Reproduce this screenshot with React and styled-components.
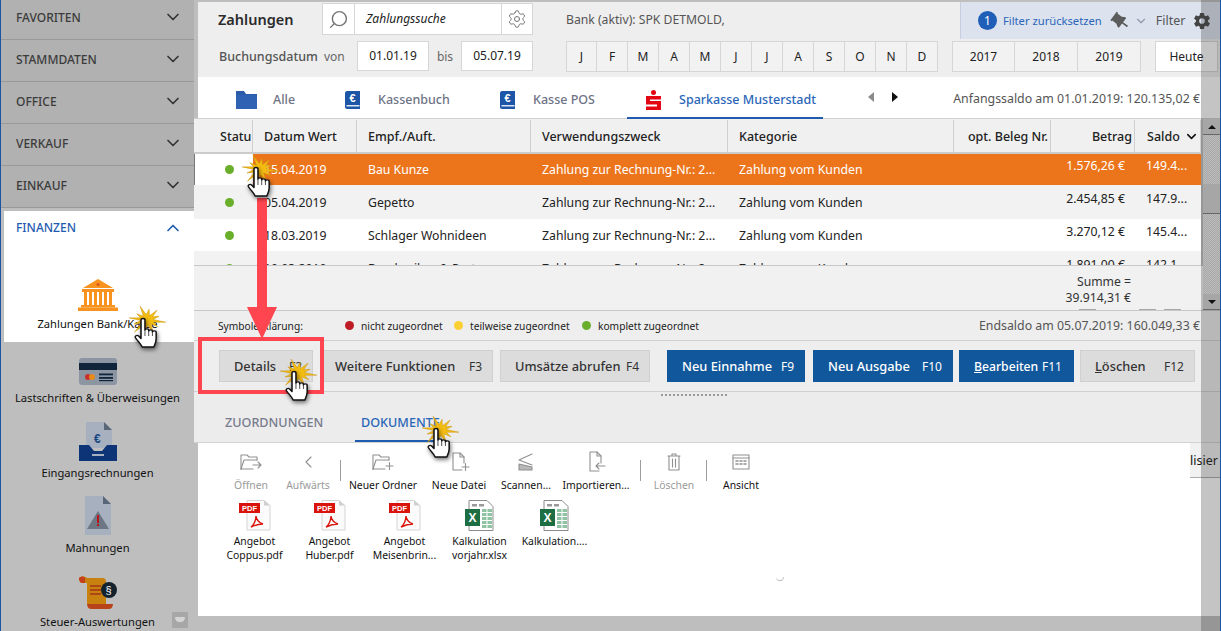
import React from 'react';
import styled, { createGlobalStyle } from 'styled-components';
import { ChevronDown, ChevronUp, Search, Settings } from 'lucide-react';
import { IoSettingsSharp } from 'react-icons/io5';
import { RiPushpinFill } from 'react-icons/ri';

const GlobalStyle = createGlobalStyle`
	html, body { margin: 0; padding: 0; background: #bebebe; }
	* { box-sizing: border-box; }
	body { font-family: "Noto Sans", "Open Sans", sans-serif; font-size: 12px; color: #222; }
`;

const Shell = styled.div`
	position: relative;
	display: flex;
	width: 1221px;
	height: 631px;
	overflow: hidden;
	background: #bebebe;
`;

/* ---------- sidebar ---------- */
const Sidebar = styled.aside`
	position: relative;
	flex: 0 0 194px;
	display: flex;
	flex-direction: column;
	margin-top: -2px;
	border-left: 1px solid #1c55a5;
	background: #bebebe;
`;
const SideHead = styled.div`
	display: flex;
	align-items: center;
	justify-content: space-between;
	height: 42px;
	flex: none;
	padding: 0 11px 3px 15px;
	background: #b1b1b1;
	border-bottom: 1px solid #999;
	color: #3b3b3b;
	font-size: 12px;
	font-weight: 500;
`;
const ActivePanel = styled.div`
	margin: 3px 0 0 3px;
	height: 131px;
	flex: none;
	background: #fff;
`;
const ActiveHead = styled.div`
	display: flex;
	align-items: center;
	justify-content: space-between;
	height: 33px;
	padding: 0 11px 0 12px;
	color: #1f5cb0;
	font-size: 12px;
	font-weight: 500;
`;
const NavItem = styled.div`
	display: flex;
	flex-direction: column;
	align-items: center;
	flex: none;
	margin-top: ${p => p.$top}px;
	margin-left: ${p => p.$left || 0}px;
	color: #111;
	font-size: 11.2px;
	line-height: 16px;
	white-space: nowrap;
	svg { display: block; margin-bottom: ${p => p.$gap}px; }
`;
const CollapseButton = styled.div`
	position: absolute;
	right: 6px;
	top: 614px;
	width: 16px;
	height: 16px;
	background: #a7a7a7;
	&::after {
		content: '';
		position: absolute;
		left: 3px;
		top: 5px;
		width: 10px;
		height: 5px;
		border-radius: 1px 1px 5px 5px;
		background: #d4d4d4;
	}
`;

/* ---------- main ---------- */
const Main = styled.main`
	flex: 0 0 1027px;
	display: flex;
	flex-direction: column;
	padding-top: 2px;
`;
const Toolbar = styled.section`
	margin-left: 4px;
	height: 75px;
	flex: none;
	background: #eeeeee;
`;
const ToolRow = styled.div`
	display: flex;
	align-items: ${p => p.$align || 'flex-start'};
	height: ${p => p.$h}px;
	padding-left: ${p => p.$pad || 0}px;
	padding-bottom: ${p => p.$bottom || 0}px;
`;
const Title = styled.h1`
	flex: 0 0 104px;
	margin: 0;
	padding: 6px 0 0 0;
	font-size: 14.5px;
	line-height: 22px;
	font-weight: 600;
	color: #2b2b2b;
`;
const SearchBox = styled.div`
	display: flex;
	width: 211px;
	height: 32px;
	margin-top: 1px;
	background: #fff;
	border: 1px solid #d6d6d6;
`;
const SearchCell = styled.div`
	flex: 0 0 ${p => p.$w}px;
	display: flex;
	align-items: center;
	justify-content: center;
	border-left: ${p => (p.$line ? '1px solid #d6d6d6' : 'none')};
	color: #757575;
`;
const SearchText = styled.div`
	flex: 1;
	padding-left: 11px;
	border-left: 1px solid #d6d6d6;
	line-height: 30px;
	font-style: italic;
	font-size: 12px;
	color: #222;
`;
const BankText = styled.div`
	margin-left: 33px;
	padding-top: 9px;
	font-size: 12.2px;
	color: #555;
	line-height: 18px;
`;
const FilterPanel = styled.div`
	display: flex;
	align-items: center;
	margin-left: auto;
	flex: 0 0 261px;
	height: 37px;
	padding-left: 17px;
	background: #dce3ef;
	border-left: 1px solid #c5cfe0;
`;
const FilterBadge = styled.span`
	flex: none;
	width: 19px;
	height: 19px;
	margin-right: 6px;
	border-radius: 50%;
	background: #1f5fb8;
	color: #fff;
	text-align: center;
	font-size: 12px;
	line-height: 19px;
`;
const FilterReset = styled.span`
	color: #2a66b8;
	font-size: 11.2px;
	white-space: nowrap;
`;
const FilterLabel = styled.span`
	margin: 0 8px 0 8px;
	color: #555;
	font-size: 12.5px;
`;
const DateLabel = styled.span`
	flex: 0 0 ${p => p.$w}px;
	font-size: ${p => p.$size || 12}px;
	font-weight: ${p => p.$weight || 400};
	text-align: ${p => p.$align || 'left'};
	color: ${p => p.$color || '#666'};
	white-space: nowrap;
`;
const DateInput = styled.div`
	flex: 0 0 72px;
	height: 30px;
	background: #fff;
	border: 1px solid #d6d6d6;
	text-align: center;
	line-height: 28px;
	font-size: 12px;
	color: #222;
`;
const Segment = styled.div`
	display: flex;
	flex: none;
	margin-left: ${p => p.$ml}px;
	height: 31px;
`;
const SegCell = styled.div`
	width: ${p => p.$w}px;
	background: ${p => (p.$white ? '#fff' : '#f2f2f2')};
	border: 1px solid #d6d6d6;
	border-left-width: ${p => (p.$first ? 1 : 0)}px;
	text-align: center;
	line-height: 29px;
	font-size: 12px;
	color: #222;
`;

const TabBar = styled.nav`
	display: flex;
	align-items: stretch;
	height: 42px;
	flex: none;
	padding: 0 21px 0 25px;
	background: linear-gradient(to right, #bebebe 4px, #fff 4px);
	border-bottom: 1px solid #cfcfcf;
`;
const Tab = styled.div`
	flex: 0 0 ${p => p.$w}px;
	display: flex;
	align-items: center;
	padding: 5px 0 0 ${p => p.$pad}px;
	color: ${p => (p.$active ? '#2a66b8' : '#6e7385')};
	font-size: 12.5px;
	font-weight: 500;
	border-bottom: ${p => (p.$active ? '2px solid #1f5cb0' : '2px solid transparent')};
	margin-bottom: -1px;
`;
const TabIcon = styled.span`
	flex: 0 0 ${p => p.$w}px;
	display: flex;
	align-items: center;
`;
const Pager = styled.div`
	display: flex;
	align-items: center;
	gap: 18px;
	margin-left: 45px;
	padding-bottom: 2px;
`;
const Caret = styled.span`
	width: 0;
	height: 0;
	border-style: solid;
	border-width: 5px 0 5px 0;
	border-color: transparent;
	${p => (p.$left
		? `border-right: 6px solid ${p.$color};`
		: `border-left: 6px solid ${p.$color};`)}
`;
const SaldoText = styled.div`
	margin-left: auto;
	align-self: center;
	padding-top: 2px;
	font-size: 12.35px;
	color: #555;
	white-space: nowrap;
`;

const columns = '59px 104px 174px 197px 226px 97px 84px 66px';
const TableHead = styled.div`
	display: grid;
	grid-template-columns: ${columns};
	width: 1007px;
	height: 35px;
	flex: none;
	padding-top: 1px;
	background: #f0f0f0;
	border-bottom: 2px solid #cbcbcb;
`;
const HeadCell = styled.div`
	display: flex;
	align-items: center;
	justify-content: ${p => (p.$right ? 'flex-end' : 'flex-start')};
	padding: 0 ${p => (p.$right ? 2 : 0)}px 0 ${p => p.$pad ?? 11}px;
	border-right: 1px solid #cfcfcf;
	font-size: 12.5px;
	font-weight: 500;
	color: #222;
	white-space: nowrap;
	overflow: hidden;
`;
const TableBody = styled.div`
	width: 1007px;
	height: 111px;
	flex: none;
	overflow: hidden;
	background: #fff;
`;
const Row = styled.div`
	display: grid;
	grid-template-columns: ${columns};
	height: ${p => p.$h}px;
	background: ${p => p.$bg};
	color: #222;
	font-size: 12.25px;
	line-height: 20px;
`;
const Cell = styled.div`
	padding: ${p => p.$top}px ${p => (p.$right ? 10 : 0)}px 0 11px;
	white-space: nowrap;
	overflow: hidden;
	color: ${p => p.$color || 'inherit'};
	text-align: ${p => (p.$right ? 'right' : 'left')};
`;
const StatusCell = styled.div`
	padding: ${p => p.$top + 5}px 0 0 ${p => (p.$mark ? 30 : 31)}px;
	background: ${p => p.$bg};
	border-left: ${p => (p.$mark ? '1px solid #777' : 'none')};
`;
const Dot = styled.span`
	display: block;
	flex: none;
	width: 9px;
	height: 9px;
	border-radius: 50%;
	background: ${p => p.$color};
`;
const SumBar = styled.div`
	display: flex;
	flex-direction: column;
	align-items: flex-end;
	height: 46px;
	flex: none;
	padding: 8px 90px 0 0;
	background: #f1f1f1;
	border-top: 1px solid #c8c8c8;
	border-bottom: 1px solid #c8c8c8;
	text-align: right;
	line-height: 16px;
	font-size: 12.2px;
	color: #333;
`;
const Ticks = styled.div`
	display: flex;
	margin: 3px -50px 0 0;
	gap: 8px;
`;
const Tick = styled.i`
	display: block;
	width: 17px;
	height: 1px;
	margin-left: ${p => p.$ml || 0}px;
	background: #a8a8a8;
`;
const LegendBar = styled.div`
	display: flex;
	align-items: center;
	height: 30px;
	flex: none;
	padding: 0 21px 0 24px;
	background: #eeeeee;
	border-bottom: 1px solid #d0d0d0;
	font-size: 10.2px;
	color: #222;
`;
const LegendTitle = styled.span`
	flex: 0 0 127px;
`;
const LegendItem = styled.span`
	flex: 0 0 ${p => p.$w}px;
	display: flex;
	align-items: center;
	gap: 7px;
	white-space: nowrap;
`;
const EndSaldo = styled.span`
	margin-left: auto;
	font-size: 12.35px;
	color: #555;
	white-space: nowrap;
`;
const ActionBar = styled.div`
	display: flex;
	height: 51px;
	flex: none;
	padding: 9px 0 0 25px;
	background: #eeeeee;
	border-bottom: 1px solid #d0d0d0;
`;
const ActionButton = styled.div`
	flex: 0 0 ${p => p.$w}px;
	display: flex;
	align-items: center;
	justify-content: space-between;
	height: 32px;
	margin-left: ${p => p.$ml || 0}px;
	padding: 0 ${p => p.$right ?? 10}px 0 14px;
	background: ${p => (p.$primary ? '#11579b' : '#dcdcdc')};
	border: 1px solid ${p => (p.$primary ? '#11579b' : '#d0d0d0')};
	color: ${p => (p.$primary ? '#fff' : '#333')};
	font-size: ${p => p.$size || 12.8}px;
	font-weight: 500;
	white-space: nowrap;
	small { font-size: 12px; font-weight: 400; }
`;
const DetailPane = styled.section`
	height: 51px;
	flex: none;
	background: #ececec;
	border-bottom: 1px solid #d2d2d2;
`;
const Splitter = styled.div`
	width: 68px;
	height: 4px;
	margin: 1px 0 0 466px;
	background-image: radial-gradient(#9a9a9a 1px, transparent 1px);
	background-size: 4px 4px;
`;
const DetailTabs = styled.div`
	display: flex;
	height: 45px;
	padding-left: 31px;
`;
const DetailTab = styled.div`
	flex: 0 0 ${p => p.$w}px;
	padding: 17px 0 0 ${p => p.$pad}px;
	line-height: 18px;
	font-size: 12.6px;
	font-weight: 500;
	white-space: nowrap;
	color: ${p => (p.$active ? '#2a66b8' : '#777b8c')};
	border-bottom: ${p => (p.$active ? '2px solid #1f5cb0' : '2px solid transparent')};
`;
const Documents = styled.section`
	margin-left: 4px;
	height: 173px;
	flex: none;
	background: #fff;
`;
const DocTools = styled.div`
	display: flex;
	height: 53px;
	padding-left: 27px;
`;
const DocTool = styled.div`
	flex: 0 0 ${p => p.$w}px;
	display: flex;
	flex-direction: column;
	align-items: center;
	padding-top: 10px;
	font-size: 10.4px;
	line-height: 14px;
	white-space: nowrap;
	color: ${p => (p.$off ? '#9a9a9a' : '#111')};
	svg { display: block; margin-bottom: 7px; }
`;
const DocSep = styled.i`
	flex: none;
	width: 1px;
	height: 21px;
	margin: 17px ${p => p.$r}px 0 ${p => p.$l}px;
	background: #9d9d9d;
`;
const ClippedButton = styled.div`
	margin-left: auto;
	width: 31px;
	height: 35px;
	background: #f1f1f1;
	border-bottom: 1px solid #aaa;
	font-size: 12.5px;
	line-height: 36px;
	color: #111;
`;
const FileGrid = styled.div`
	display: flex;
	padding: 4px 0 0 19px;
`;
const FileItem = styled.div`
	flex: 0 0 75px;
	display: flex;
	flex-direction: column;
	align-items: center;
	text-align: center;
	font-size: 10.4px;
	line-height: 13.5px;
	color: #111;
	white-space: nowrap;
	svg { display: block; margin-bottom: 4px; }
`;

/* ---------- tutorial overlays ---------- */
const DimStrip = styled.div`
	position: absolute;
	left: 1201px;
	top: 0;
	bottom: 0;
	width: 20px;
	background: rgba(60, 60, 60, 0.3);
	border-right: 1px solid #1c55a5;
`;
const ScrollBar = styled.div`
	position: absolute;
	left: 1203px;
	top: 119px;
	width: 17px;
	height: 191px;
	background: repeating-conic-gradient(#a8a8a8 0 25%, #bcbcbc 0 50%) 0 0 / 2px 2px;
`;
const ScrollBtn = styled.div`
	position: absolute;
	left: 0;
	${p => (p.$down ? 'bottom: 0;' : 'top: 0;')}
	width: 17px;
	height: 16px;
	background: #a6a6a6;
	border-bottom: 1px solid #666;
	display: flex;
	align-items: center;
	justify-content: center;
`;
const ScrollThumb = styled.div`
	position: absolute;
	left: 0;
	top: 65px;
	width: 17px;
	height: 30px;
	background: #a6a6a6;
	border-bottom: 1px solid #666;
`;
const MiniCaret = styled.span`
	width: 0;
	height: 0;
	border-left: 4px solid transparent;
	border-right: 4px solid transparent;
	${p => (p.$down ? 'border-top: 4px solid #111;' : 'border-bottom: 4px solid #111;')}
`;
const ArrowShaft = styled.div`
	position: absolute;
	left: 257px;
	top: 198px;
	width: 10px;
	height: 110px;
	background: #ff4550;
`;
const ArrowHead = styled.div`
	position: absolute;
	left: 247px;
	top: 307px;
	width: 0;
	height: 0;
	border-left: 15px solid transparent;
	border-right: 15px solid transparent;
	border-top: 32px solid #ff4550;
`;
const HighlightBox = styled.div`
	position: absolute;
	left: 198px;
	top: 337px;
	width: 126px;
	height: 57px;
	border: 4px solid #ff4550;
`;
const Smudge = styled.div`
	position: absolute;
	left: 776px;
	top: 577px;
	width: 8px;
	height: 4px;
	border-bottom: 1px solid #bbb;
	border-right: 1px solid #ccc;
	border-radius: 0 0 6px 6px;
`;
const ClickMarkWrap = styled.div`
	position: absolute;
	left: ${p => p.$x}px;
	top: ${p => p.$y}px;
	width: 40px;
	height: 52px;
	svg { position: absolute; overflow: visible; }
`;

/* ---------- drawings ---------- */
const burstRadii = [19, 7, 14, 6, 17, 7, 13, 6, 20, 7, 14, 6, 18, 7, 13, 6, 19, 7, 14, 6, 16, 7, 13, 6];
const burstPoints = burstRadii
	.map((r, i) => {
		const a = (i / burstRadii.length) * Math.PI * 2 + 0.15;
		return `${(Math.cos(a) * r).toFixed(1)},${(Math.sin(a) * r * 0.78).toFixed(1)}`;
	})
	.join(' ');

const ClickMark = ({ x, y }) => (
	<ClickMarkWrap $x={x} $y={y}>
		<svg width="40" height="32" viewBox="-20 -16 40 32" style={{ left: 0, top: 0 }}>
			<polygon points={burstPoints} fill="#f4bd12" stroke="#c9920a" strokeWidth="0.5" />
		</svg>
		<svg
			width="28"
			height="32"
			viewBox="0 0 24 32"
			preserveAspectRatio="none"
			style={{ left: 7, top: 14, filter: 'drop-shadow(1px 2px 2px rgba(0,0,0,.55))' }}
		>
			<path
				d="M6 2c0-2 3.400-2 3.400 0v10c0-1.600 3.200-1.600 3.200 0v1c0-1.600 3.200-1.600 3.200 0v1c0-1.600 3.200-1.600 3.200 0v7c0 3-1 5-2 8H7c-1-3-4-6-5.600-9-1-2 1-3.500 2.600-2l2 2.500z"
				fill="#fff"
				stroke="#111"
				strokeWidth="1.300"
				strokeLinejoin="round"
			/>
			<path d="M9.400 12v6M12.600 13v5M15.800 14v4" stroke="#333" strokeWidth="0.800" />
		</svg>
	</ClickMarkWrap>
);

const BankIcon = () => (
	<svg width="40" height="32" viewBox="0 0 40 32">
		<path d="M20 0 35 9H5z" fill="#f7931e" />
		<circle cx="20" cy="5.500" r="1.500" fill="#d9541e" />
		<rect x="4" y="10" width="32" height="3" fill="#f7931e" />
		{[6, 11, 16, 21, 26, 31].map(x => <rect key={x} x={x} y="13" width="3" height="13" fill="#f7931e" />)}
		<rect x="3" y="26" width="34" height="2.500" fill="#f7931e" />
		<rect x="0" y="28.500" width="40" height="3.500" fill="#f7931e" />
	</svg>
);
const CardIcon = () => (
	<svg width="38" height="27" viewBox="0 0 38 27">
		<rect width="38" height="27" rx="3" fill="#8c96a3" />
		<rect y="5" width="38" height="7" fill="#10253a" />
		<circle cx="9" cy="19" r="3" fill="#c9302c" />
		<circle cx="13" cy="19" r="3" fill="#e8891c" />
		<rect x="20" y="15.500" width="14" height="1.800" fill="#10253a" />
		<rect x="20" y="19" width="14" height="1.800" fill="#10253a" />
		<rect x="20" y="22" width="14" height="1.200" fill="#10253a" />
	</svg>
);
const InvoiceIcon = () => (
	<svg width="38" height="39" viewBox="0 0 38 39">
		<path d="M7 0h18l8 8v18H7z" fill="#a6b0bf" />
		<path d="M25 0l8 8h-8z" fill="#596677" />
		<text x="15" y="21" fontSize="12" fontWeight="700" fill="#16457f" fontFamily="Liberation Sans, sans-serif">€</text>
		<path d="M0 23h10l5 6h8l5-6h10v16H0z" fill="#0d3476" />
		<rect x="13" y="32" width="12" height="2" fill="#a6b0bf" />
	</svg>
);
const WarnIcon = () => (
	<svg width="26" height="39" viewBox="0 0 26 39">
		<path d="M0 0h18l8 8v31H0z" fill="#a6b0bf" />
		<path d="M18 0l8 8h-8z" fill="#596677" />
		<path d="M13 15l11 18H2z" fill="#6d7784" />
		<rect x="12" y="19" width="2" height="8" fill="#b5171c" />
		<rect x="12" y="28" width="2" height="2" fill="#b5171c" />
	</svg>
);
const TaxIcon = () => (
	<svg width="38" height="34" viewBox="0 0 38 34">
		<path d="M0 2c2-2 6-2 8 0h16c3 0 3 3 3 5v21H8V7H3C1 7 0 4 0 2z" fill="#c8800f" />
		<path d="M0 2c2-2 5-2 6 0v5H3C1 7 0 4 0 2z" fill="#c3401a" />
		<path d="M8 28h26c0 3-2 5-4 5H12c-2 0-4-2-4-5z" fill="#b8431a" />
		<path d="M11 10h11M11 14h11M11 18h11" stroke="#a4361a" strokeWidth="1.500" />
		<circle cx="30" cy="14" r="8" fill="#14222e" />
		<text x="26.500" y="18" fontSize="11" fill="#fff" fontFamily="Liberation Sans, sans-serif">§</text>
	</svg>
);
const FolderTabIcon = () => (
	<svg width="21" height="18" viewBox="0 0 21 18">
		<path d="M0 0h8l2 3h11v15H0z" fill="#2a5caa" />
		<rect y="4" width="21" height="14" fill="#2f62b3" />
	</svg>
);
const BookIcon = () => (
	<svg width="15" height="18" viewBox="0 0 15 18">
		<path d="M2 0h13v18H2c-1 0-2-1-2-2V2c0-1 1-2 2-2z" fill="#1d56a6" />
		<rect x="1.500" y="14" width="13" height="1.500" fill="#dbe5f3" />
		<text x="4.500" y="11" fontSize="11" fontWeight="700" fill="#fff" fontFamily="Liberation Sans, sans-serif">€</text>
	</svg>
);
const SparkasseIcon = () => (
	<svg width="15" height="20" viewBox="0 0 15 20">
		<circle cx="7.500" cy="2.500" r="2.500" fill="#e30613" />
		<path d="M0 6h15v3.500H4v1.500h11v9H0v-3.500h11V14.500H0z" fill="#e30613" />
	</svg>
);
const toolStroke = { fill: 'none', stroke: '#909090', strokeWidth: 1.100, strokeLinejoin: 'round', strokeLinecap: 'round' };
const FolderOpenIcon = ({ mark }) => (
	<svg width="22" height="18" viewBox="0 0 22 18" {...toolStroke}>
		<path d="M1 16V2h6l2 2h8v3" />
		<path d="M1 16l3-9h13" />
		<path d="M1 16h12" />
		{mark === 'arrow' ? <path d="M13 12h8M18 9l3 3-3 3" /> : <path d="M14 13h7M17.500 9.500v7" />}
	</svg>
);
const BackIcon = () => (
	<svg width="22" height="18" viewBox="0 0 22 18" {...toolStroke}>
		<path d="M14 4l-5 5 5 5" />
	</svg>
);
const NewFileIcon = () => (
	<svg width="22" height="18" viewBox="0 0 22 18" {...toolStroke} style={{ overflow: 'visible' }}>
		<path d="M14 17H5V0h7l4 4v6" />
		<path d="M12 0v4h4" />
		<path d="M14 14h7M17.500 10.500v7" />
	</svg>
);
const ScanIcon = () => (
	<svg width="22" height="18" viewBox="0 0 22 18" {...toolStroke}>
		<path d="M4 7L17 1M4 7l13 5" />
		<path d="M4 11l13 3v3H4z" fill="#b9b9b9" />
	</svg>
);
const ImportIcon = () => (
	<svg width="22" height="18" viewBox="0 0 22 18" {...toolStroke} style={{ overflow: 'visible' }}>
		<path d="M14 18H5V-1h7l4 4v7" />
		<path d="M12-1v4h4" />
		<path d="M20 13h-9M14 10l-3 3 3 3" />
	</svg>
);
const TrashIcon = () => (
	<svg width="22" height="18" viewBox="0 0 22 18" {...toolStroke}>
		<path d="M5 3h12M9 3V1h4v2M6 3v14h10V3M9.500 6v8M12.500 6v8" />
	</svg>
);
const ViewIcon = () => (
	<svg width="22" height="18" viewBox="0 0 22 18" {...toolStroke}>
		<rect x="3" y="2" width="16" height="14" />
		<path d="M3 5h16" />
		<path d="M6 8h2M10 8h2M14 8h2M6 11h2M10 11h2M14 11h2" strokeWidth="1.600" />
	</svg>
);
const PdfIcon = () => (
	<svg width="32" height="31" viewBox="0 0 32 31">
		<path d="M8 .5h17l6 5v24.500H8z" fill="#fbfbfb" stroke="#d4d4d4" />
		<path d="M25 .5l6 5h-6z" fill="#d0d0d0" />
		<rect x="0" y="3" width="21" height="10" fill="#d9140c" />
		<text x="3" y="11.200" fontSize="7.500" fontWeight="700" fill="#fff" fontFamily="Liberation Sans, sans-serif">PDF</text>
		<path d="M12 27c3-2 5-7 5-11 0 3 3 7 7 8-4 0-8 1-12 3z" fill="none" stroke="#d9140c" strokeWidth="1.400" />
	</svg>
);
const XlsIcon = () => (
	<svg width="30" height="31" viewBox="0 0 30 31">
		<path d="M4 .5h18l6 6v24H4z" fill="#fff" stroke="#8c8c8c" />
		<rect x="7" y="4" width="5" height="2.500" fill="#9a9a9a" />
		<rect x="14" y="4" width="5" height="2.500" fill="#9a9a9a" />
		{[9, 13, 17, 21, 25].map(y => <rect key={y} x="17" y={y} width="4.500" height="3" fill="#8fc3a3" />)}
		{[9, 13, 17, 21, 25].map(y => <rect key={y} x="22.500" y={y} width="4.500" height="3" fill="#8fc3a3" />)}
		<rect x="0" y="9" width="15" height="17" fill="#1d6e42" />
		<text x="3.500" y="22" fontSize="12" fontWeight="700" fill="#fff" fontFamily="Liberation Sans, sans-serif">X</text>
	</svg>
);

/* ---------- data ---------- */
const sections = ['FAVORITEN', 'STAMMDATEN', 'OFFICE', 'VERKAUF', 'EINKAUF'];
const months = ['J', 'F', 'M', 'A', 'M', 'J', 'J', 'A', 'S', 'O', 'N', 'D'];
const payments = [
	{ date: '15.04.2019', name: 'Bau Kunze', amount: '1.576,26 €', saldo: '149.4...', h: 31, top: 6 },
	{ date: '05.04.2019', name: 'Gepetto', amount: '2.454,85 €', saldo: '147.9...', h: 34, top: 8 },
	{ date: '18.03.2019', name: 'Schlager Wohnideen', amount: '3.270,12 €', saldo: '145.4...', h: 32, top: 7 },
	{ date: '10.03.2019', name: 'Beschreiber & Partner', amount: '1.891,00 €', saldo: '142.1...', h: 33, top: 8 },
];
const files = [
	{ icon: <PdfIcon />, lines: ['Angebot', 'Coppus.pdf'] },
	{ icon: <PdfIcon />, lines: ['Angebot', 'Huber.pdf'] },
	{ icon: <PdfIcon />, lines: ['Angebot', 'Meisenbrin...'] },
	{ icon: <XlsIcon />, lines: ['Kalkulation', 'vorjahr.xlsx'] },
	{ icon: <XlsIcon />, lines: ['Kalkulation....'] },
];

const App = () => (
	<>
		<GlobalStyle />
		<Shell>
			<Sidebar>
				{sections.map(name => (
					<SideHead key={name}>
						{name}
						<ChevronDown size={20} strokeWidth={2} color="#333" />
					</SideHead>
				))}
				<ActivePanel>
					<ActiveHead>
						FINANZEN
						<ChevronUp size={20} strokeWidth={2} color="#1f5cb0" />
					</ActiveHead>
					<NavItem $top={35} $gap={5} $left={-3}>
						<BankIcon />
						Zahlungen Bank/Kasse
					</NavItem>
				</ActivePanel>
				<NavItem $top={16} $gap={5}>
					<CardIcon />
					Lastschriften &amp; Überweisungen
				</NavItem>
				<NavItem $top={16} $gap={4}>
					<InvoiceIcon />
					Eingangsrechnungen
				</NavItem>
				<NavItem $top={15} $gap={5}>
					<WarnIcon />
					Mahnungen
				</NavItem>
				<NavItem $top={20} $gap={4}>
					<TaxIcon />
					Steuer-Auswertungen
				</NavItem>
				<CollapseButton />
			</Sidebar>

			<Main>
				<Toolbar>
					<ToolRow $h={39} $pad={20}>
						<Title>Zahlungen</Title>
						<SearchBox>
							<SearchCell $w={31}>
								<Search size={21} strokeWidth={1.6} style={{ transform: 'scaleX(-1)' }} />
							</SearchCell>
							<SearchText>Zahlungssuche</SearchText>
							<SearchCell $w={31} $line>
								<Settings size={20} strokeWidth={1.2} />
							</SearchCell>
						</SearchBox>
						<BankText>Bank (aktiv): SPK DETMOLD,</BankText>
						<FilterPanel>
							<FilterBadge>1</FilterBadge>
							<FilterReset>Filter zurücksetzen</FilterReset>
							<RiPushpinFill size={21} color="#5c5c5c" style={{ marginLeft: 7, flex: 'none', transform: 'scaleX(-1) rotate(8deg)' }} />
							<ChevronDown size={14} color="#8f97a6" style={{ marginLeft: 4, flex: 'none' }} />
							<FilterLabel>Filter</FilterLabel>
							<IoSettingsSharp size={18} color="#444" style={{ flex: 'none' }} />
						</FilterPanel>
					</ToolRow>
					<ToolRow $h={36} $pad={21} $bottom={6} $align="center">
						<DateLabel $w={105} $size={12.5} $weight={500} $color="#555">Buchungsdatum</DateLabel>
						<DateLabel $w={33}>von</DateLabel>
						<DateInput>01.01.19</DateInput>
						<DateLabel $w={32} $align="center">bis</DateLabel>
						<DateInput>05.07.19</DateInput>
						<Segment $ml={33}>
							{months.map((m, i) => <SegCell key={i} $w={31} $first={i === 0}>{m}</SegCell>)}
						</Segment>
						<Segment $ml={14}>
							{['2017', '2018', '2019'].map((y, i) => <SegCell key={y} $w={63} $first={i === 0}>{y}</SegCell>)}
						</Segment>
						<Segment $ml={14}>
							<SegCell $w={63} $first $white>Heute</SegCell>
						</Segment>
					</ToolRow>
				</Toolbar>

				<TabBar>
					<Tab $w={109} $pad={17}><TabIcon $w={37}><FolderTabIcon /></TabIcon>Alle</Tab>
					<Tab $w={155} $pad={17}><TabIcon $w={33}><BookIcon /></TabIcon>Kassenbuch</Tab>
					<Tab $w={144} $pad={17}><TabIcon $w={33}><BookIcon /></TabIcon>Kasse POS</Tab>
					<Tab $w={196} $pad={19} $active><TabIcon $w={33}><SparkasseIcon /></TabIcon>Sparkasse Musterstadt</Tab>
					<Pager>
						<Caret $left $color="#8a8a8a" />
						<Caret $color="#111" />
					</Pager>
					<SaldoText>Anfangssaldo am 01.01.2019: 120.135,02 €</SaldoText>
				</TabBar>

				<TableHead>
					<HeadCell $pad={26}>Statu</HeadCell>
					<HeadCell>Datum Wert</HeadCell>
					<HeadCell>Empf./Auft.</HeadCell>
					<HeadCell>Verwendungszweck</HeadCell>
					<HeadCell>Kategorie</HeadCell>
					<HeadCell $right>opt. Beleg Nr.</HeadCell>
					<HeadCell $right>Betrag</HeadCell>
					<HeadCell $pad={12}>Saldo <ChevronDown size={15} strokeWidth={2.4} color="#111" style={{ marginLeft: 4 }} /></HeadCell>
				</TableHead>
				<TableBody>
					{payments.map((p, i) => {
						const selected = i === 0;
						const bg = selected ? '#ec751c' : i % 2 ? '#f2f2f2' : '#fff';
						const color = selected ? '#fff' : undefined;
						return (
							<Row key={p.date} $h={p.h} $bg={bg}>
								<StatusCell $top={p.top} $bg={selected ? '#fff' : bg} $mark={selected}>
									<Dot $color="#6aaf2b" />
								</StatusCell>
								<Cell $top={p.top} $color={color}>{p.date}</Cell>
								<Cell $top={p.top} $color={color}>{p.name}</Cell>
								<Cell $top={p.top} $color={color}>Zahlung zur Rechnung-Nr.: 2...</Cell>
								<Cell $top={p.top} $color={color}>Zahlung vom Kunden</Cell>
								<Cell $top={p.top} />
								<Cell $top={p.top - 4} $right $color={color}>{p.amount}</Cell>
								<Cell $top={p.top - 4} $color={color}>{p.saldo}</Cell>
							</Row>
						);
					})}
				</TableBody>
				<SumBar>
					<div>Summe =</div>
					<div>39.914,31 €</div>
					<Ticks>
						<Tick />
						<Tick $ml={35} />
						<Tick />
					</Ticks>
				</SumBar>
				<LegendBar>
					<LegendTitle>Symbolerklärung:</LegendTitle>
					<LegendItem $w={109}><Dot $color="#bd1c24" />nicht zugeordnet</LegendItem>
					<LegendItem $w={128}><Dot $color="#fbd035" />teilweise zugeordnet</LegendItem>
					<LegendItem $w={200}><Dot $color="#6aaf2b" />komplett zugeordnet</LegendItem>
					<EndSaldo>Endsaldo am 05.07.2019: 160.049,33 €</EndSaldo>
				</LegendBar>
				<ActionBar>
					<ActionButton $w={94}>Details<small>F2</small></ActionButton>
					<ActionButton $w={173} $ml={7}>Weitere Funktionen<small>F3</small></ActionButton>
					<ActionButton $w={150} $ml={7}>Umsätze abrufen<small>F4</small></ActionButton>
					<ActionButton $w={138} $ml={17} $primary>Neu Einnahme<small>F9</small></ActionButton>
					<ActionButton $w={140} $ml={8} $primary>Neu Ausgabe<small>F10</small></ActionButton>
					<ActionButton $w={115} $ml={6} $primary $size={12.2} $right={11}><span><u>B</u>earbeiten</span><small>F11</small></ActionButton>
					<ActionButton $w={115} $ml={6}><span><u>L</u>öschen</span><small>F12</small></ActionButton>
				</ActionBar>
				<DetailPane>
					<Splitter />
					<DetailTabs>
						<DetailTab $w={130} $pad={0}>ZUORDNUNGEN</DetailTab>
						<DetailTab $w={92} $pad={6} $active>DOKUMENTE</DetailTab>
					</DetailTabs>
				</DetailPane>
				<Documents>
					<DocTools>
						<DocTool $w={52} $off><FolderOpenIcon mark="arrow" />Öffnen</DocTool>
						<DocTool $w={62} $off><BackIcon />Aufwärts</DocTool>
						<DocSep $l={1} $r={4} />
						<DocTool $w={76}><FolderOpenIcon mark="plus" />Neuer Ordner</DocTool>
						<DocTool $w={76}><NewFileIcon />Neue Datei</DocTool>
						<DocTool $w={58}><ScanIcon />Scannen...</DocTool>
						<DocTool $w={82}><ImportIcon />Importieren...</DocTool>
						<DocSep $l={3} $r={3} />
						<DocTool $w={60} $off><TrashIcon />Löschen</DocTool>
						<DocSep $l={2} $r={4} />
						<DocTool $w={60}><ViewIcon />Ansicht</DocTool>
						<ClippedButton>lisier</ClippedButton>
					</DocTools>
					<FileGrid>
						{files.map((f, i) => (
							<FileItem key={i}>
								{f.icon}
								{f.lines.map(l => <div key={l}>{l}</div>)}
							</FileItem>
						))}
					</FileGrid>
				</Documents>
			</Main>

			<DimStrip />
			<ScrollBar>
				<ScrollBtn><MiniCaret /></ScrollBtn>
				<ScrollThumb />
				<ScrollBtn $down><MiniCaret $down /></ScrollBtn>
			</ScrollBar>
			<Smudge />
			<ArrowShaft />
			<ArrowHead />
			<HighlightBox />
			<ClickMark x={240} y={153} />
			<ClickMark x={127} y={304} />
			<ClickMark x={278} y={357} />
			<ClickMark x={420} y={414} />
		</Shell>
	</>
);

export default App;
